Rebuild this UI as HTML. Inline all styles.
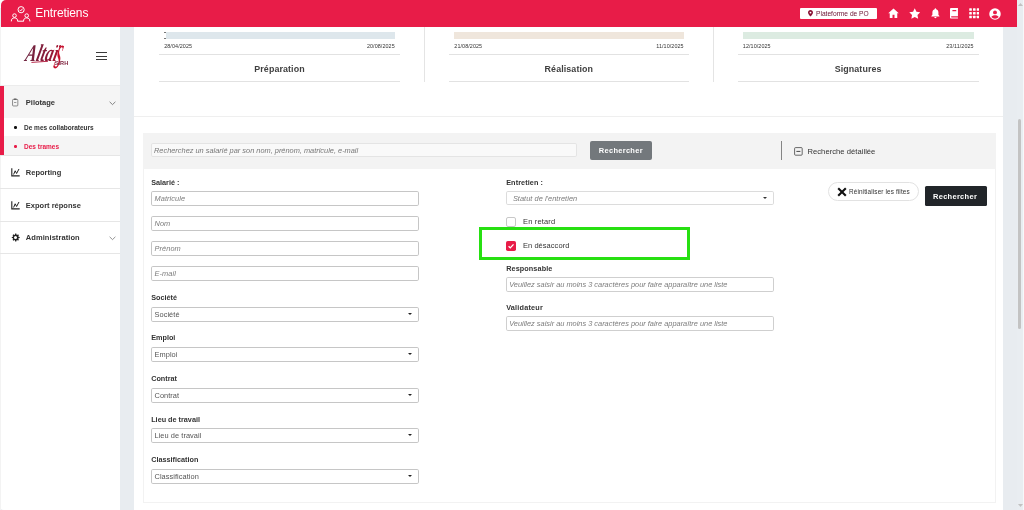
<!DOCTYPE html>
<html lang="fr">
<head>
<meta charset="utf-8">
<title>Entretiens</title>
<style>
*{box-sizing:border-box;margin:0;padding:0}
html,body{width:1024px;height:510px;overflow:hidden;background:#e8ecf0;font-family:"Liberation Sans","DejaVu Sans",sans-serif;color:#333}
.abs{position:absolute}
#side,#main,#hdr,#sb{will-change:transform}
.t{position:absolute;white-space:nowrap;line-height:10px}
#hdr{position:absolute;left:1px;top:0;width:1016px;height:26.5px;background:#e81c48;border-top-left-radius:5px}
#hdr svg{position:absolute}
#hdr .badge{position:absolute;left:798.5px;top:8px;width:77.5px;height:10.8px;background:#fff;border-radius:1px}
#side{position:absolute;left:0;top:26px;width:120px;height:484px;background:#fff;border-bottom-left-radius:4px}
#side .logo{position:absolute;left:22px;top:14px;width:52px;height:30px}
#side .burger i{position:absolute;left:96px;width:11px;height:1.1px;background:#3a3a3a}
#side svg{position:absolute}
.mi{position:absolute;left:25.8px;font-weight:bold;color:#333;font-size:7.5px;line-height:10px;white-space:nowrap}
.sub{position:absolute;left:24px;font-size:6.5px;font-weight:bold;line-height:10px;color:#333;white-space:nowrap}
.dot{position:absolute;left:14.2px;width:2.4px;height:2.4px;border-radius:50%;background:#111}
.sep{position:absolute;left:0;width:120px;height:1px;background:#e6e6e6}
#main{position:absolute;left:134px;top:26px;width:869.3px;height:484px;background:#fff}
#main .bar{position:absolute;height:6.5px;top:6.4px}
#main .dt{position:absolute;top:15px;font-size:5.4px;letter-spacing:0.09px;color:#333;line-height:10px;white-space:nowrap}
#main .hl{position:absolute;height:1px;background:#e2e2e2}
#main .ct{position:absolute;top:36px;font-size:8.9px;font-weight:bold;color:#404040;text-align:center;line-height:14px;letter-spacing:0.1px}
#main .vl{position:absolute;top:0;width:1px;height:55.5px;background:#e4e4e4}
.lab{position:absolute;font-size:7.25px;font-weight:bold;color:#333;line-height:10px;white-space:nowrap}
.inp{position:absolute;height:15px;border:1px solid #c6c6c6;border-radius:1.8px;background:#fff}
.ph{position:absolute;font-size:7.4px;line-height:10px;color:#7c7c7c;font-style:italic;white-space:nowrap}
.sv{position:absolute;font-size:7.4px;line-height:10px;color:#555;white-space:nowrap}
.car{position:absolute;width:0;height:0;border-left:2.1px solid transparent;border-right:2.1px solid transparent;border-top:2.3px solid #222}
#sb{position:absolute;left:1017px;top:0;width:7px;height:510px;background:#e9edf1;border-right:1px solid #f6f8fa}
</style>
</head>
<body>
<div class="abs" style="left:0;top:0;width:8px;height:8px;background:#fafafa"></div>
<div id="side">
<div class="abs" style="left:0;top:0;width:1px;height:484px;background:#f3f3f3"></div>
<svg style="left:0;top:0" width="120" height="60" viewBox="0 26 120 60">
<defs><linearGradient id="lg" x1="0" x2="1" y1="0" y2="0"><stop offset="0" stop-color="#6d2742"/><stop offset="0.6" stop-color="#8a1a38"/><stop offset="1" stop-color="#b5132f"/></linearGradient></defs>
<text transform="translate(24.5 60.6) skewX(-14) scale(0.8 1.2)" font-family="'Liberation Serif','DejaVu Serif',serif" font-style="italic" font-weight="bold" font-size="20" fill="url(#lg)">Altaï<tspan font-size="40" font-weight="normal" fill="#c8102e" dx="-2.2" dy="6.5" textLength="8" lengthAdjust="spacingAndGlyphs">s</tspan></text>
<path d="M31.8 62.4L47.6 61.3" stroke="#b0163a" stroke-width="0.9" stroke-linecap="round" fill="none"/>
<text x="54.8" y="65" font-family="'Liberation Sans',sans-serif" font-weight="bold" font-size="4.7" fill="#7d1d3a" textLength="13.4" lengthAdjust="spacingAndGlyphs">SIRH</text>
</svg>
<div class="burger"><i style="top:26.2px"></i><i style="top:29.5px"></i><i style="top:32.8px"></i></div>
<div class="sep" style="top:59px;background:#ececec"></div>
<div class="abs" style="left:0;top:60px;width:4px;height:70px;background:#e81c48"></div>
<div class="abs" style="left:4px;top:60px;width:116px;height:32px;background:#f5f5f5"></div>
<div class="abs" style="left:4px;top:110px;width:116px;height:19.5px;background:#f5f5f5"></div>
<div class="mi" style="top:72px">Pilotage</div>
<svg style="left:12.2px;top:71.8px" width="6.4" height="8.8" viewBox="0 0 7 9"><rect x="0.6" y="1.2" width="5.8" height="7.2" rx="0.9" fill="none" stroke="#666" stroke-width="0.8"/><rect x="2" y="0.3" width="3" height="1.6" rx="0.4" fill="#666"/><path d="M2.2 4.6h2.6" stroke="#666" stroke-width="0.7"/></svg>
<svg style="left:109px;top:74.5px" width="7" height="5" viewBox="0 0 7 5"><path d="M0.6 0.8L3.5 3.6L6.4 0.8" fill="none" stroke="#666" stroke-width="0.8"/></svg>

<i class="dot" style="top:100.4px"></i><div class="sub" style="top:97px">De mes collaborateurs</div>
<i class="dot" style="top:119.4px;background:#e81c48"></i><div class="sub" style="top:116px;color:#e81c48">Des trames</div>
<div class="sep" style="top:129px"></div>
<div class="mi" style="top:142px">Reporting</div><svg style="left:11.3px;top:142px" width="9" height="8.7" viewBox="0 0 9 8.7"><path d="M0.8 0.3V7.9H8.7" fill="none" stroke="#222" stroke-width="1.1"/><path d="M2.6 6.5L4.2 2.8L5.6 5.5L8 1" fill="none" stroke="#222" stroke-width="1"/></svg>

<div class="sep" style="top:162px"></div>
<div class="mi" style="top:175px">Export réponse</div><svg style="left:11.3px;top:175px" width="9" height="8.7" viewBox="0 0 9 8.7"><path d="M0.8 0.3V7.9H8.7" fill="none" stroke="#222" stroke-width="1.1"/><path d="M2.6 6.5L4.2 2.8L5.6 5.5L8 1" fill="none" stroke="#222" stroke-width="1"/></svg>

<div class="sep" style="top:195px"></div>
<div class="mi" style="top:207px;letter-spacing:0.07px">Administration</div>
<svg style="left:11px;top:207.3px" width="9" height="9" viewBox="0 0 16 16"><path fill="#222" d="M9.4 1l.5 2 .9.4 1.800-1 1.400 1.400-1 1.800.4.900 2 .5v2l-2 .5-.4.900 1 1.800-1.400 1.400-1.800-1-.9.400-.5 2h-2l-.5-2-.9-.4-1.800 1-1.400-1.400 1-1.800-.4-.9-2-.5v-2l2-.5.4-.9-1-1.800 1.400-1.400 1.800 1 .9-.4.500-2zM8 5.300a2.700 2.700 0 100 5.400 2.700 2.700 0 000-5.400z"/></svg>
<svg style="left:109px;top:210px" width="7" height="5" viewBox="0 0 7 5"><path d="M0.6 0.8L3.5 3.6L6.4 0.8" fill="none" stroke="#777" stroke-width="0.8"/></svg>

<div class="sep" style="top:227px"></div>
</div>
<div id="main">
<div class="bar" style="left:30.2px;width:230.6px;background:#dee7ec"></div>
<div class="dt" style="left:30.2px">28/04/2025</div><div class="dt" style="right:608.5px">20/08/2025</div>
<div class="hl" style="left:25px;width:241px;top:28px"></div><div class="hl" style="left:25px;width:241px;top:54.6px"></div>
<div class="ct" style="left:25px;width:241px">Préparation</div>
<div class="bar" style="left:320.3px;width:229.4px;background:#efe6dc"></div>
<div class="dt" style="left:320.3px">21/08/2025</div><div class="dt" style="right:319.6px">11/10/2025</div>
<div class="hl" style="left:315px;width:239.7px;top:28px"></div><div class="hl" style="left:315px;width:239.7px;top:54.6px"></div>
<div class="ct" style="left:315px;width:239.7px">Réalisation</div>
<div class="bar" style="left:608.8px;width:230.9px;background:#dcebe1"></div>
<div class="dt" style="left:608.8px">12/10/2025</div><div class="dt" style="right:29.6px">23/11/2025</div>
<div class="hl" style="left:603.5px;width:241.2px;top:28px"></div><div class="hl" style="left:603.5px;width:241.2px;top:54.6px"></div>
<div class="ct" style="left:603.5px;width:241.2px">Signatures</div>
<div class="vl" style="left:290px"></div><div class="vl" style="left:579px"></div>
<div class="abs" style="left:30px;top:6.2px;width:2.2px;height:6.9px;background:#fff"></div><div class="abs" style="left:30.2px;top:6.2px;width:1.7px;height:1px;background:#777"></div><div class="abs" style="left:30.2px;top:12.1px;width:1.7px;height:1px;background:#777"></div>
<div class="hl" style="left:0;width:869.3px;top:90px;background:#efefef"></div>
<div class="abs" style="left:8.5px;top:107px;width:853px;height:369.8px;border:1px solid #f2f2f2;border-top:0"></div>
<div class="abs" style="left:8.5px;top:107px;width:853px;height:35.7px;background:#f3f3f3"></div>
<div class="inp" style="left:16.6px;top:117px;width:426.5px;height:14px;background:#f9f9f9;border-color:#e4e4e4"></div>
<div class="ph" style="left:20px;top:120px;color:#777;">Recherchez un salarié par son nom, prénom, matricule, e-mail</div>
<div class="abs" style="left:456px;top:115.2px;width:62px;height:19px;background:#73787c;border-radius:2px"></div>
<div class="t" style="left:464.8px;top:120px;font-size:7.47px;letter-spacing:0.3px;color:#fff;font-weight:bold;">Rechercher</div>
<div class="abs" style="left:647px;top:115px;width:1px;height:19px;background:#858585"></div>
<svg class="abs" style="left:660px;top:121px" width="9" height="9" viewBox="0 0 9 9"><rect x="0.6" y="0.6" width="7.6" height="7.6" rx="0.9" fill="none" stroke="#444" stroke-width="0.8"/><path d="M2.4 4.4h4" stroke="#333" stroke-width="0.9"/></svg>
<div class="t" style="left:673.5px;top:121px;font-size:7.6px;letter-spacing:0.04px;color:#333;">Recherche détaillée</div>
<div class="lab" style="left:17.2px;top:152px;">Salarié :</div>
<div class="inp" style="left:17px;top:165px;width:268px"></div>
<div class="ph" style="left:20.5px;top:168px;letter-spacing:0.08px;">Matricule</div>
<div class="inp" style="left:17px;top:190px;width:268px"></div>
<div class="ph" style="left:20.5px;top:193px;letter-spacing:0.08px;">Nom</div>
<div class="inp" style="left:17px;top:215px;width:268px"></div>
<div class="ph" style="left:20.5px;top:218px;letter-spacing:0.08px;">Prénom</div>
<div class="inp" style="left:17px;top:240px;width:268px"></div>
<div class="ph" style="left:20.5px;top:243px;letter-spacing:0.08px;">E-mail</div>
<div class="lab" style="left:17.2px;top:267px;">Société</div>
<div class="inp" style="left:17px;top:281px;width:268px"></div>
<div class="sv" style="left:20.5px;top:284px;letter-spacing:0.06px;">Société</div>
<div class="car" style="left:273.6px;top:287px"></div>
<div class="lab" style="left:17.2px;top:307px;">Emploi</div>
<div class="inp" style="left:17px;top:321px;width:268px"></div>
<div class="sv" style="left:20.5px;top:324px;letter-spacing:0.06px;">Emploi</div>
<div class="car" style="left:273.6px;top:327px"></div>
<div class="lab" style="left:17.2px;top:348px;">Contrat</div>
<div class="inp" style="left:17px;top:362px;width:268px"></div>
<div class="sv" style="left:20.5px;top:365px;letter-spacing:0.06px;">Contrat</div>
<div class="car" style="left:273.6px;top:368px"></div>
<div class="lab" style="left:17.2px;top:389px;">Lieu de travail</div>
<div class="inp" style="left:17px;top:402px;width:268px"></div>
<div class="sv" style="left:20.5px;top:405px;letter-spacing:0.06px;">Lieu de travail</div>
<div class="car" style="left:273.6px;top:408px"></div>
<div class="lab" style="left:17.2px;top:429px;">Classification</div>
<div class="inp" style="left:17px;top:443px;width:268px"></div>
<div class="sv" style="left:20.5px;top:446px;letter-spacing:0.06px;">Classification</div>
<div class="car" style="left:273.6px;top:449px"></div>
<div class="lab" style="left:372.2px;top:152px;letter-spacing:0.1px;">Entretien :</div>
<div class="inp" style="left:372.2px;top:165px;width:267.8px;height:14px;border-color:#dcdcdc"></div>
<div class="ph" style="left:378.9px;top:168px;letter-spacing:0.04px;">Statut de l'entretien</div>
<div class="car" style="left:629.2px;top:170.7px;border-left-width:2px;border-right-width:2px;border-top-width:2px;border-top-color:#333"></div>
<div class="abs" style="left:372px;top:191px;width:10px;height:10px;border:1px solid #c8c8c8;border-radius:2px;background:#fff"></div>
<div class="t" style="left:389px;top:191px;font-size:7.47px;letter-spacing:0.17px;color:#333;">En retard</div>
<div class="abs" style="left:345px;top:201px;width:211px;height:33px;border:3px solid #27e012"></div>
<svg class="abs" style="left:372px;top:215px" width="10" height="10" viewBox="0 0 10 10"><rect width="10" height="10" rx="1.8" fill="#e81c48"/><path d="M2.6 5.2L4.3 6.9L7.5 3.4" fill="none" stroke="#fff" stroke-width="1.3"/></svg>
<div class="t" style="left:389px;top:215px;font-size:7.47px;letter-spacing:0.06px;color:#333;">En désaccord</div>
<div class="lab" style="left:372.2px;top:238px;letter-spacing:0.1px;">Responsable</div>
<div class="inp" style="left:372.2px;top:251px;width:267.8px;border-color:#cfcfcf"></div>
<div class="ph" style="left:375.2px;top:254px;">Veuillez saisir au moins 3 caractères pour faire apparaître une liste</div>
<div class="lab" style="left:372.2px;top:277px;letter-spacing:0.22px;">Validateur</div>
<div class="inp" style="left:372.2px;top:290px;width:267.8px;border-color:#cfcfcf"></div>
<div class="ph" style="left:375.2px;top:293px;">Veuillez saisir au moins 3 caractères pour faire apparaître une liste</div>
<div class="abs" style="left:693.8px;top:156px;width:91px;height:19px;border:1px solid #e2e2e2;border-radius:10px;background:#fff"></div>
<svg class="abs" style="left:703px;top:160.5px" width="10" height="10" viewBox="0 0 10 10"><path d="M1.2 1.2L8.8 8.8M8.8 1.2L1.2 8.8" stroke="#111" stroke-width="2.1"/></svg>
<div class="t" style="left:715px;top:161px;font-size:6.4px;letter-spacing:0.12px;color:#333;">Réinitialiser les filtes</div>
<div class="abs" style="left:790.6px;top:160.3px;width:62px;height:19.6px;background:#212529;border-radius:1.5px"></div>
<div class="t" style="left:799px;top:166px;font-size:7.47px;letter-spacing:0.3px;color:#fff;font-weight:bold;">Rechercher</div>
</div>
<div id="hdr">
<div class="t" style="left:34.3px;top:8px;font-size:12px;letter-spacing:-0.1px;color:#fff;">Entretiens</div>

<svg style="left:0;top:0" width="40" height="26" viewBox="1 0 40 26" fill="none" stroke="#fff" stroke-width="1">
<circle cx="21.1" cy="9.700" r="3.100"/><path d="M19.600 9.800L20.700 10.900L22.700 8.600" stroke-width="1"/>
<circle cx="14.500" cy="15.600" r="1.800"/><path d="M11.300 21.400c0-2.400 1.200-3.500 3.200-3.500s3.200 1.100 3.200 3.500"/>
<circle cx="26.700" cy="15.600" r="1.800"/><path d="M23.500 21.400c0-2.400 1.200-3.500 3.200-3.500s3.200 1.100 3.200 3.500"/>
<path d="M17.700 21.200h5.800"/>
</svg>
<div class="badge"><svg style="left:8px;top:2.200px" width="5" height="6.6" viewBox="0 0 10 13"><path fill="#8a1235" d="M5 0C2.200 0 0 2.200 0 5c0 3.500 5 8 5 8s5-4.500 5-8c0-2.800-2.200-5-5-5zm0 6.800a1.800 1.800 0 110-3.600 1.800 1.800 0 010 3.600z"/></svg><div class="t" style="left:16.5px;top:1px;font-size:6.64px;color:#6b1030;">Plateforme de PO</div>
</div>
<svg style="left:886.5px;top:8px" width="11" height="10.5" viewBox="0 0 22 21"><path fill="#fff" d="M11 1L0.500 10.500h3V20h5.500v-6.500h4V20h5.500v-9.500h3z"/></svg>
<svg style="left:907.5px;top:7.800px" width="11.5" height="11" viewBox="0 0 24 23"><path fill="#fff" d="M12 0.500l3.500 7.400 8 1.100-5.800 5.600 1.400 8L12 18.800 4.900 22.600l1.400-8L0.500 9l8-1.100z"/></svg>
<svg style="left:929.8px;top:7.8px" width="8.8" height="10.8" viewBox="0 0 19 23"><path fill="#fff" d="M9.500 0.500c-.9 0-1.600.7-1.600 1.600v.6C5 3.500 3 6 3 9v5.500L0.800 17v1.200h17.400V17L16 14.500V9c0-3-2-5.500-4.900-6.300v-.6c0-.9-.7-1.600-1.600-1.600zM7 19.500a2.500 2.500 0 005 0z"/></svg>
<svg style="left:948.5px;top:8px" width="8.2" height="10.6" viewBox="0 0 17 22"><path fill="#fff" d="M2.500 0h14v17h-13c-.8 0-1.400.600-1.400 1.400s.6 1.400 1.400 1.400h13V22h-14C1.100 22 0 20.900 0 19.500v-17C0 1.100 1.100 0 2.500 0zM5 4v3h8V4z"/></svg>
<svg style="left:967.5px;top:8.2px" width="10.6" height="10.6" viewBox="0 0 22 22" fill="#fff"><rect x="0.5" y="0.5" width="5.4" height="5.4" rx="0.8"/><rect x="8.3" y="0.5" width="5.4" height="5.4" rx="0.8"/><rect x="16.1" y="0.5" width="5.4" height="5.4" rx="0.8"/><rect x="0.5" y="8.3" width="5.4" height="5.4" rx="0.8"/><rect x="8.3" y="8.3" width="5.4" height="5.4" rx="0.8"/><rect x="16.1" y="8.3" width="5.4" height="5.4" rx="0.8"/><rect x="0.5" y="16.1" width="5.4" height="5.4" rx="0.8"/><rect x="8.3" y="16.1" width="5.4" height="5.4" rx="0.8"/><rect x="16.1" y="16.1" width="5.4" height="5.4" rx="0.8"/></svg>
<svg style="left:987.8px;top:7.5px" width="12" height="12" viewBox="0 0 24 24"><circle cx="12" cy="12" r="11.5" fill="#fff"/><circle cx="12" cy="8.800" r="3.900" fill="#e81c48"/><path fill="#e81c48" d="M4.600 18.200c1.400-2.600 4.200-3.900 7.400-3.900s6 1.300 7.400 3.900A10 10 0 0112 21.500a10 10 0 01-7.400-3.300z"/></svg>
</div>
<div id="sb"><svg class="abs" style="left:1px;top:2.5px" width="5" height="3" viewBox="0 0 5 3"><path d="M2.5 0L5 3H0z" fill="#c2c2c2"/></svg>
<svg class="abs" style="left:1px;top:504px" width="5" height="3" viewBox="0 0 5 3"><path d="M2.5 3L5 0H0z" fill="#c2c2c2"/></svg>
<div class="abs" style="left:1.2px;top:118.8px;width:2.9px;height:210px;background:#c3c3c3;border-radius:1.5px"></div></div>
</body>
</html>
